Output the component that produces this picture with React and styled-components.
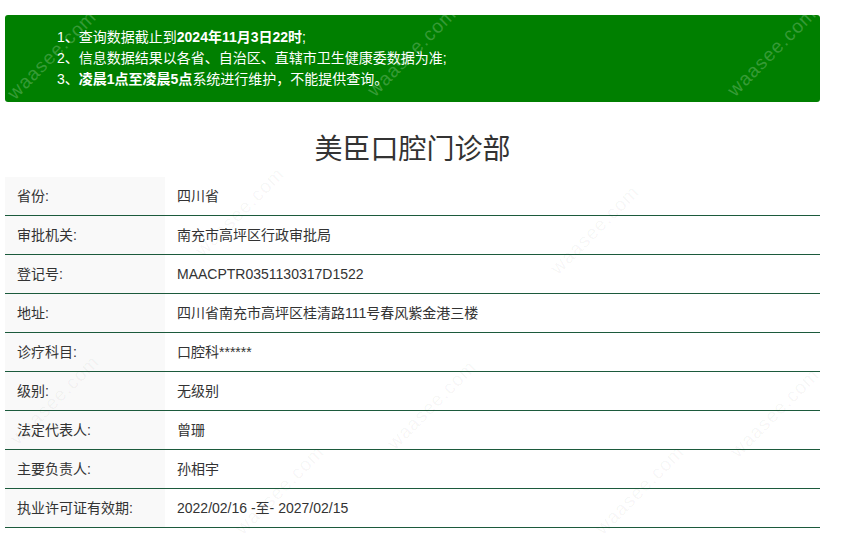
import React from 'react';
import styled, { createGlobalStyle } from 'styled-components';

const GlobalStyle = createGlobalStyle`
    body {
        margin: 0;
        background: #ffffff;
        font-family: "Liberation Sans", "Noto Sans CJK SC", sans-serif;
        color: #333333;
    }
`;

const Page = styled.div`
    position: relative;
    width: 815px;
    min-height: 536px;
    padding: 15px 21px 0 5px;
`;

const Notice = styled.div`
    background-color: #007f00;
    border-radius: 3px;
    padding: 12px 0 12px 52px;
    color: #ffffff;
    font-size: 14px;
    line-height: 21px;

    p {
        margin: 0;
    }

    b {
        font-weight: bold;
    }
`;

const Title = styled.h1`
    margin: 25px 0 10px;
    height: 40px;
    line-height: 40px;
    font-size: 28px;
    font-weight: normal;
    text-align: center;
    color: #333333;
    font-family: "Noto Sans CJK SC", sans-serif;
`;

const Table = styled.div`
    display: grid;
    grid-template-columns: 160px 1fr;
`;

const Label = styled.div`
    height: 38px;
    line-height: 38px;
    padding-left: 12px;
    background-color: #f9f9f9;
    border-bottom: 1px solid #1c5a3c;
    font-size: 14px;
`;

const Value = styled.div`
    height: 38px;
    line-height: 38px;
    padding-left: 12px;
    border-bottom: 1px solid #1c5a3c;
    font-size: 14px;
`;

const Marks = styled.div`
    position: absolute;
    inset: 0;
    pointer-events: none;
`;

const Mark = styled.span`
    position: absolute;
    transform: translate(-50%, -50%) rotate(-45deg);
    font-family: "Liberation Sans", sans-serif;
    font-size: 19px;
    letter-spacing: 1px;
    white-space: nowrap;
    color: ${props => props.onGreen ? 'rgba(255,255,255,0.22)' : 'rgba(0,0,0,0.045)'};
`;

const rows = [
    ['省份:', '四川省'],
    ['审批机关:', '南充市高坪区行政审批局'],
    ['登记号:', 'MAACPTR0351130317D1522'],
    ['地址:', '四川省南充市高坪区桂清路111号春风紫金港三楼'],
    ['诊疗科目:', '口腔科******'],
    ['级别:', '无级别'],
    ['法定代表人:', '曾珊'],
    ['主要负责人:', '孙相宇'],
    ['执业许可证有效期:', '2022/02/16 -至- 2027/02/15'],
];

const marks = [
    [52, 55, true], [412, 52, true], [772, 52, true],
    [240, 212], [595, 230],
    [55, 400], [432, 405], [775, 413],
    [280, 490], [640, 490],
];

export default function App() {
    return (
        <Page>
            <GlobalStyle />
            <Notice>
                <p>1、查询数据截止到<b>2024年11月3日22时</b>;</p>
                <p>2、信息数据结果以各省、自治区、直辖市卫生健康委数据为准;</p>
                <p>3、<b>凌晨1点至凌晨5点</b>系统进行维护，不能提供查询。</p>
            </Notice>
            <Title>美臣口腔门诊部</Title>
            <Table>
                {rows.map(([k, v]) => (
                    <React.Fragment key={k}>
                        <Label>{k}</Label>
                        <Value>{v}</Value>
                    </React.Fragment>
                ))}
            </Table>
            <Marks>
                {marks.map(([x, y, g], i) => (
                    <Mark key={i} onGreen={g} style={{ left: x, top: y }}>waasee.com</Mark>
                ))}
            </Marks>
        </Page>
    );
}
